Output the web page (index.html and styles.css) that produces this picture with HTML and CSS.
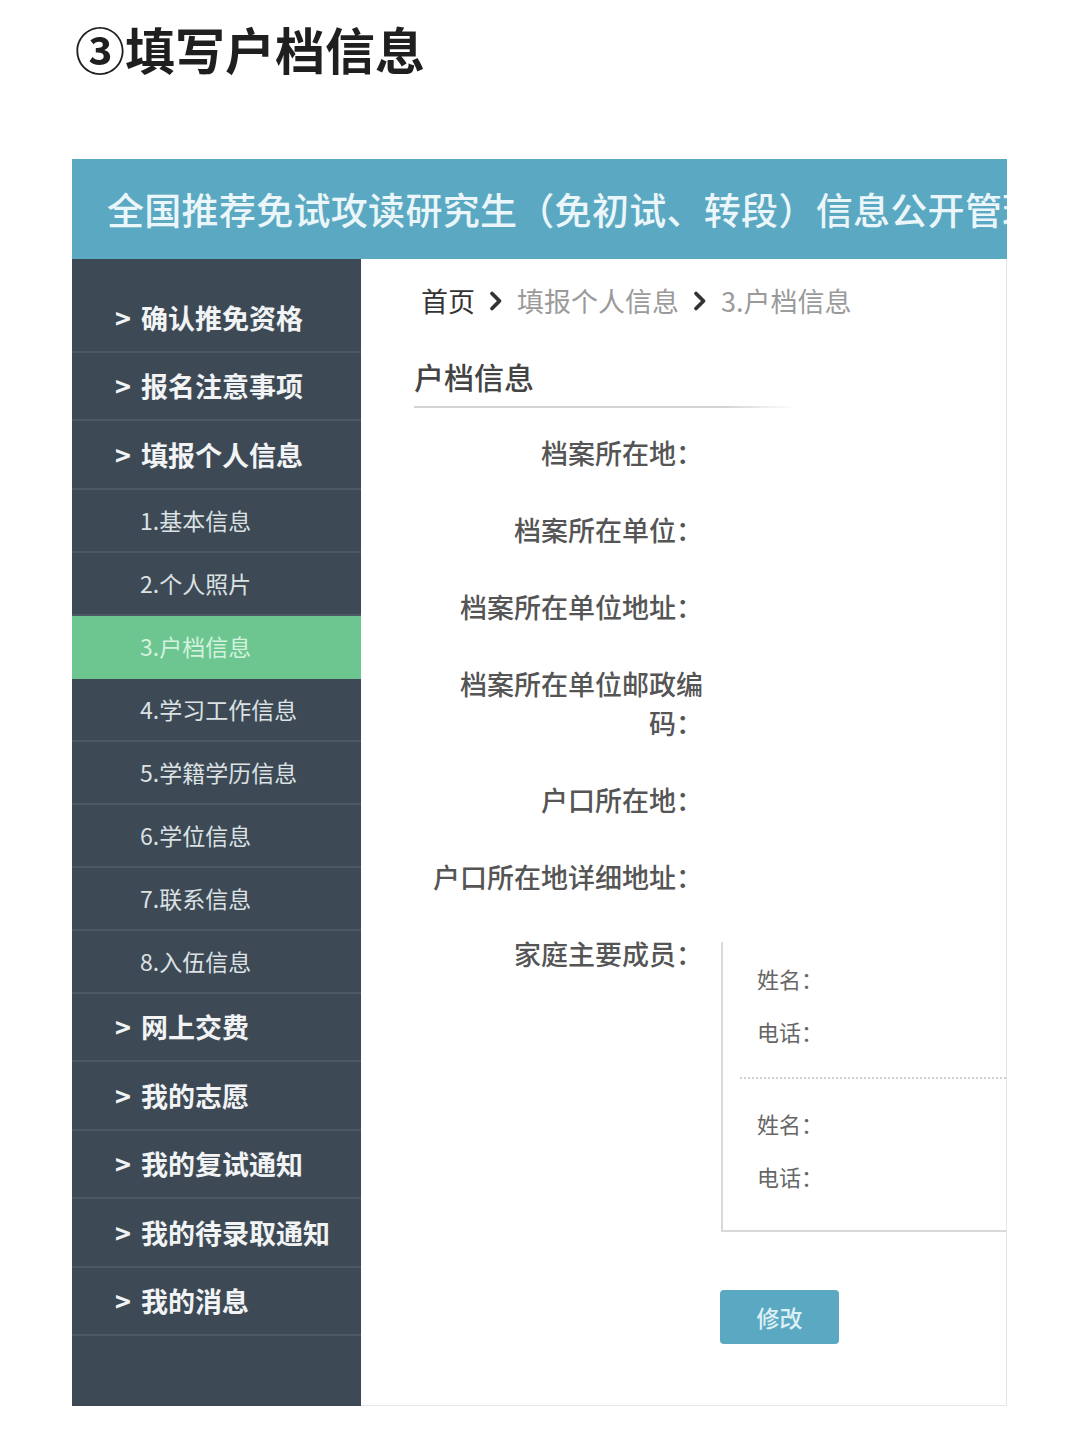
FILE: index.html
```html
<!DOCTYPE html>
<html lang="zh-CN">
<head>
<meta charset="utf-8">
<title>填写户档信息</title>
<link rel="stylesheet" href="styles.css">
</head>
<body>
<h1 class="title">③填写户档信息</h1>
<div class="frame">
  <div class="banner"><span class="banner-text">全国推荐免试攻读研究生（免初试、转段）信息公开管理服务系统</span></div>
  <div class="frame-body">
    <nav class="sidebar">
      <div class="nav-main"><span class="arrow">&gt;</span>确认推免资格</div>
      <div class="nav-main"><span class="arrow">&gt;</span>报名注意事项</div>
      <div class="nav-main"><span class="arrow">&gt;</span>填报个人信息</div>
      <div class="nav-sub">1.基本信息</div>
      <div class="nav-sub">2.个人照片</div>
      <div class="nav-sub active">3.户档信息</div>
      <div class="nav-sub">4.学习工作信息</div>
      <div class="nav-sub">5.学籍学历信息</div>
      <div class="nav-sub">6.学位信息</div>
      <div class="nav-sub">7.联系信息</div>
      <div class="nav-sub">8.入伍信息</div>
      <div class="nav-main"><span class="arrow">&gt;</span>网上交费</div>
      <div class="nav-main"><span class="arrow">&gt;</span>我的志愿</div>
      <div class="nav-main"><span class="arrow">&gt;</span>我的复试通知</div>
      <div class="nav-main"><span class="arrow">&gt;</span>我的待录取通知</div>
      <div class="nav-main"><span class="arrow">&gt;</span>我的消息</div>
    </nav>
    <main class="content">
      <div class="crumbs">
        <span class="crumb-home">首页</span>
        <svg class="chev" width="14" height="22" viewBox="0 0 14 22"><path d="M3 3.5 L10.5 11 L3 18.5" fill="none" stroke="#333" stroke-width="3.8" stroke-linecap="round" stroke-linejoin="round"/></svg>
        <span class="crumb">填报个人信息</span>
        <svg class="chev" width="14" height="22" viewBox="0 0 14 22"><path d="M3 3.5 L10.5 11 L3 18.5" fill="none" stroke="#333" stroke-width="3.8" stroke-linecap="round" stroke-linejoin="round"/></svg>
        <span class="crumb">3.户档信息</span>
      </div>
      <h2 class="section-title">户档信息</h2>
      <div class="form">
        <div class="row"><div class="label">档案所在地：</div><div class="value"></div></div>
        <div class="row"><div class="label">档案所在单位：</div><div class="value"></div></div>
        <div class="row"><div class="label">档案所在单位地址：</div><div class="value"></div></div>
        <div class="row"><div class="label">档案所在单位邮政编码：</div><div class="value"></div></div>
        <div class="row"><div class="label">户口所在地：</div><div class="value"></div></div>
        <div class="row"><div class="label">户口所在地详细地址：</div><div class="value"></div></div>
        <div class="row">
          <div class="label">家庭主要成员：</div>
          <div class="family">
            <div class="member first">
              <div class="member-line">姓名：</div>
              <div class="member-line">电话：</div>
            </div>
            <div class="member">
              <div class="member-line">姓名：</div>
              <div class="member-line">电话：</div>
            </div>
          </div>
        </div>
        <div class="actions"><button class="btn">修改</button></div>
      </div>
    </main>
  </div>
</div>
</body>
</html>
```

FILE: styles.css
```css
* { box-sizing: border-box; }

html, body {
  margin: 0;
  padding: 0;
  background: #ffffff;
  font-family: "Noto Sans CJK SC", "Noto Sans", sans-serif;
}

.title {
  margin: 0;
  padding: 23px 0 0 75px;
  height: 159px;
  font-size: 50px;
  line-height: 50px;
  font-weight: 700;
  color: #1f1f1f;
}

.frame {
  margin-left: 72px;
  width: 935px;
}

.banner {
  height: 100px;
  background: #5ba8c2;
  color: #eaf6f9;
  font-size: 37px;
  font-weight: 500;
  line-height: 100px;
  padding-left: 35px;
  white-space: nowrap;
  overflow: hidden;
}

.banner-text {
  letter-spacing: 0.3px;
}

.frame-body {
  display: flex;
}

.sidebar {
  width: 289px;
  flex: none;
  background: #3d4a55;
  padding: 25px 0 70px 0;
}

.nav-main {
  height: 68.5px;
  display: flex;
  align-items: center;
  padding-left: 43px;
  border-bottom: 2px solid #4c5965;
  color: #f1f3f4;
  font-size: 27px;
  font-weight: 700;
}

.arrow {
  margin-right: 10px;
  font-weight: 700;
}

.nav-sub {
  height: 63px;
  display: flex;
  align-items: center;
  padding-left: 68px;
  border-bottom: 2px solid #4c5965;
  color: #dce1e4;
  font-size: 23px;
}

.nav-sub.active {
  background: #6dc690;
  color: #d3f2de;
  border-bottom-color: #6dc690;
}

.content {
  flex: 1;
  background: #ffffff;
  border-right: 1px solid #e4e4e4;
  border-bottom: 1px solid #e8e8e8;
  padding: 24px 0 0 53px;
}

.crumbs {
  display: flex;
  align-items: center;
  gap: 14px;
  margin-left: 7px;
  font-size: 27px;
  line-height: 36px;
}

.crumb-home { color: #333333; }
.crumb { color: #9a9a9a; }
.chev { display: block; }

.section-title {
  margin: 37px 0 0 0;
  width: 382px;
  font-size: 30px;
  line-height: 40px;
  font-weight: 500;
  color: #444444;
  padding-bottom: 10px;
  border-bottom: 2px solid transparent;
  border-image: linear-gradient(to right, #d2d2d2 0%, #d2d2d2 80%, rgba(230,230,230,0) 100%) 1;
}

.form {
  margin-top: 25px;
  padding-left: 9px;
  display: flex;
  flex-direction: column;
  gap: 38px;
}

.row {
  display: flex;
  align-items: flex-start;
}

.label {
  width: 280px;
  flex: none;
  text-align: right;
  font-size: 27px;
  line-height: 39px;
  font-weight: 500;
  color: #555555;
}

.value { flex: 1; }

.family {
  flex: 1;
  margin-left: 18px;
  margin-top: 8px;
  border-left: 2px solid #d9d9d9;
  border-bottom: 2px solid #d9d9d9;
  padding: 10px 0 27px 0;
}

.member {
  margin-left: 17px;
  padding-left: 17px;
}

.member.first {
  padding-bottom: 19px;
  border-bottom: 2px dotted #d0d0d0;
  margin-bottom: 18px;
}

.member-line {
  font-size: 22px;
  line-height: 53px;
  color: #666666;
}

.actions {
  padding-left: 297px;
  margin-top: 20px;
  padding-bottom: 61px;
}

.btn {
  width: 119px;
  height: 54px;
  border: none;
  border-radius: 4px;
  background: #5ba8c2;
  color: #dcf0f5;
  font-family: "Noto Sans CJK SC", sans-serif;
  font-size: 23px;
  font-weight: 500;
}
```
